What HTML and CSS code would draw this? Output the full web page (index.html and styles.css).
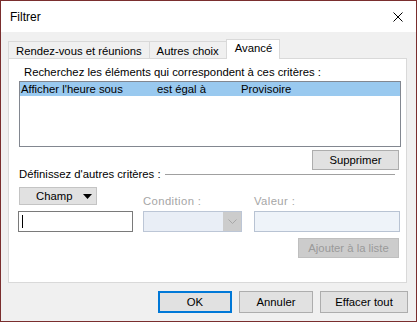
FILE: index.html
```html
<!DOCTYPE html>
<html lang="fr">
<head>
  <meta charset="UTF-8" />
  <title>Filtrer</title>
  <link rel="stylesheet" href="styles.css">
</head>
<body>

<div class="window">
  <!-- barre de titre -->
  <div class="titlebar">
    <span class="title">Filtrer</span>
    <svg class="close" width="10" height="10" viewBox="0 0 10 10">
      <path d="M0.5 0.5 L9.5 9.5 M9.5 0.5 L0.5 9.5" stroke="#000" stroke-width="1" fill="none"/>
    </svg>
  </div>

  <div class="client">
    <div class="tabs">
      <div class="tab">Rendez-vous et réunions</div>
      <div class="tab">Autres choix</div>
      <div class="tab active">Avancé</div>
    </div>

    <div class="panel">
      <div class="caption">Recherchez les éléments qui correspondent à ces critères :</div>
      <div class="listbox">
        <div class="row selected">
          <span class="c1">Afficher l'heure sous</span>
          <span class="c2">est égal à</span>
          <span class="c3">Provisoire</span>
        </div>
      </div>
      <div class="actions">
        <button class="btn supprimer">Supprimer</button>
      </div>

      <div class="group-title">
        <span>Définissez d'autres critères :</span>
        <span class="rule"></span>
      </div>

      <div class="criteria">
        <button class="btn champ">Champ
          <svg width="9" height="5" viewBox="0 0 9 5"><path d="M0 0 H9 L4.5 5 Z" fill="#000"/></svg>
        </button>
        <div class="label disabled">Condition :</div>
        <div class="label disabled">Valeur :</div>
        <div class="input field"><span class="caret"></span></div>
        <div class="combo">
          <span class="drop">
            <svg width="9" height="5" viewBox="0 0 9 5"><path d="M0.5 0.5 L4.5 4.5 L8.5 0.5" stroke="#a7a7a7" fill="none"/></svg>
          </span>
        </div>
        <div class="input value"></div>
      </div>

      <div class="actions">
        <button class="btn ajouter" disabled>Ajouter à la liste</button>
      </div>
    </div>

    <div class="footer">
      <button class="btn ok">OK</button>
      <button class="btn">Annuler</button>
      <button class="btn effacer">Effacer tout</button>
    </div>
  </div>
</div>

</body>
</html>
```

FILE: styles.css
```css
body { margin: 0; font-family: "Liberation Sans", Arial, sans-serif; font-size: 11.3px; color: #000; }
.window { width: 417px; height: 322px; box-sizing: border-box; border: 1px solid #7a2e2e; background: #f0f0f0; }

.titlebar { height: 31px; background: #fff; display: flex; align-items: center; justify-content: space-between; padding: 0 13px 0 9px; }
.title { font-size: 12px; }

.client { padding: 7px 0 0 7px; }
.tabs { display: flex; align-items: flex-end; height: 19px; }
.tab { height: 17px; box-sizing: border-box; border: 1px solid #d9d9d9; border-bottom: none; padding: 0 7px; line-height: 18px; background: #f0f0f0; margin-left: -1px; }
.tab:first-child { margin-left: 0; }
.tab.active { height: 20px; background: #fff; margin-bottom: -1px; position: relative; z-index: 1; line-height: 16px; padding: 0 7px 0 8px; }

.panel { width: 399px; height: 225px; box-sizing: border-box; border: 1px solid #d9d9d9; background: #fff; }
.caption { margin: 6px 0 0 15px; line-height: 15px; }

.listbox { margin: 1px 0 0 10px; width: 382px; height: 66px; box-sizing: border-box; border: 1px solid #828790; background: #fff; }
.row { display: flex; height: 14px; line-height: 14px; padding-left: 1px; }
.row.selected { background: #99c9ef; }
.c1 { width: 136px; }
.c2 { width: 84px; }

.actions { display: flex; justify-content: flex-end; padding-right: 7px; }
.btn { font-family: inherit; font-size: 11.3px; color: #000; background: #e1e1e1; border: 1px solid #adadad; padding: 0; box-sizing: border-box; }
.supprimer { width: 87px; height: 20px; margin-top: 3px; }

.group-title { display: flex; align-items: center; margin: -3px 0 0 10px; width: 376px; line-height: 14px; }
.rule { flex: 1; height: 1px; background: #a0a0a0; margin-left: 4px; }

.criteria { display: grid; grid-template-columns: 125px 111px 146px; grid-template-rows: 24px 21px; margin: 6px 0 0 9px; }
.champ { width: 78px; height: 18px; margin-left: 1px; display: flex; align-items: center; gap: 11px; padding-left: 16px; background: #e1e1e1; border-color: #c4c4c4; }
.label { align-self: end; line-height: 14px; padding-bottom: 3px; }
.label.disabled { color: #a6a6a6; letter-spacing: 0.4px; }

.input { box-sizing: border-box; height: 21px; }
.field { width: 115px; border: 1px solid #7a7a7a; background: #fff; padding: 3px 0 0 3px; }
.caret { display: block; width: 1px; height: 13px; background: #000; }
.combo { width: 99px; height: 21px; box-sizing: border-box; border: 1px solid #bcc6d6; background: #e9eef6; display: flex; justify-content: flex-end; }
.drop { width: 18px; background: #cccccc; display: flex; align-items: center; justify-content: center; }
.value { width: 146px; border: 1px solid #b8c3d3; background: #eef3f9; }

.ajouter { width: 101px; height: 20px; margin-top: 6px; background: #cccccc; border-color: #bfbfbf; color: #9a9a9a; }

.footer { display: flex; justify-content: flex-end; gap: 7px; padding-right: 8px; margin-top: 8px; }
.footer .btn { width: 74px; height: 22px; }
.footer .effacer { width: 88px; }
.ok { border-color: #0078d7; box-shadow: inset 0 0 0 1px #0078d7; }
```
